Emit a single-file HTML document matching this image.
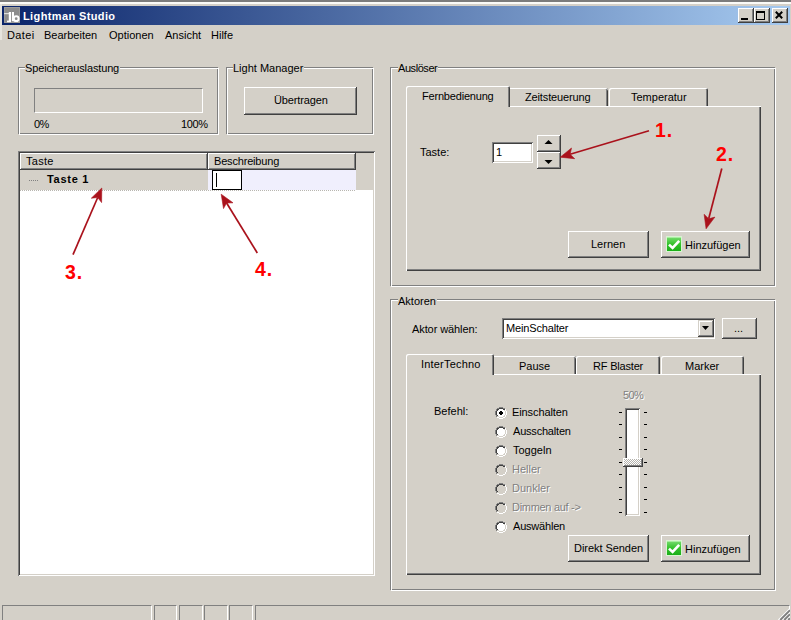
<!DOCTYPE html>
<html><head><meta charset="utf-8">
<style>
*{box-sizing:border-box;margin:0;padding:0}
html,body{width:791px;height:620px;overflow:hidden;background:#d4d0c8}
body{position:relative;font-family:"Liberation Sans",sans-serif;font-size:11px;color:#000;letter-spacing:0}
.a{position:absolute}
.t{position:absolute;white-space:nowrap;line-height:13px}
.raised{position:absolute;background:#d4d0c8;box-shadow:inset -1px -1px #404040,inset 1px 1px #fff,inset -2px -2px #808080}
.sunk{position:absolute;background:#fff;box-shadow:inset 1px 1px #808080,inset -1px -1px #fff,inset 2px 2px #404040,inset -2px -2px #d4d0c8}
.g1{position:absolute;border:1px solid #808080}
.g2{position:absolute;border:1px solid #fff}
.lbl{position:absolute;white-space:nowrap;line-height:13px;background:#d4d0c8;padding:0 1px 0 0}
.red{position:absolute;white-space:nowrap;color:#f00;font-weight:bold;font-size:19.5px;line-height:20px;letter-spacing:0.8px}
.tab{position:absolute;background:#d4d0c8;border-top-left-radius:2px;border-top-right-radius:2px;box-shadow:inset 1px 1px #fff,inset -1px 0 #404040,inset -2px 0 #808080}
.chk{position:absolute;width:16px;height:16px;background:linear-gradient(#8ee88e,#2fb52f);border:1px solid #5cb85c}
.chk::after{content:"";position:absolute;left:3px;top:2px;width:4px;height:7px;border-right:3px solid #fff;border-bottom:3px solid #fff;transform:rotate(40deg)}
.radio{position:absolute;width:12px;height:12px;border-radius:50%;background:#fff;border:1px solid;border-color:#808080 #fff #fff #808080;box-shadow:inset 1px 1px #404040,inset -1px -1px #d4d0c8}
.rdis{background:#d4d0c8}
.sb{position:absolute;height:15px;border-top:1px solid #808080;border-left:1px solid #808080;border-right:1px solid #fff}
.dis{color:#808080;text-shadow:1px 1px #fff}
</style></head><body>
<svg width="0" height="0" style="position:absolute"><defs><linearGradient id="gg" x1="0" y1="0" x2="0" y2="1"><stop offset="0" stop-color="#78dc70"/><stop offset="0.5" stop-color="#34c22c"/><stop offset="1" stop-color="#1aae18"/></linearGradient></defs></svg>
<!-- window top frame -->
<div class="a" style="left:0;top:0;width:791px;height:2px;background:#7c7c7c"></div>
<div class="a" style="left:0;top:2px;width:791px;height:2px;background:#fbfbf8"></div>
<div class="a" style="left:0;top:4px;width:2px;height:36px;background:#e6e4de"></div>
<!-- title bar -->
<div class="a" style="left:2px;top:6px;width:788px;height:19px;background:linear-gradient(90deg,#0a246a,#a6caf0)"></div>
<svg class="a" style="left:4px;top:7px" width="16" height="16"><rect x="0" y="0" width="16" height="16" fill="#8c8c8c"/><rect x="0.5" y="0.5" width="15" height="15" fill="none" stroke="#9c9c9c"/>
<g fill="#fff"><rect x="0" y="6" width="5" height="1.2" fill="#dcdcdc"/><rect x="4.8" y="5" width="2.2" height="9.5"/><rect x="3" y="13.6" width="4" height="1.6"/><rect x="7.9" y="5" width="2.1" height="9.2"/></g>
<ellipse cx="12.2" cy="11.7" rx="2.4" ry="2.4" fill="none" stroke="#fff" stroke-width="2"/></svg>
<div class="t" style="left:23px;top:10px;color:#fff;font-weight:bold;letter-spacing:0.38px">Lightman Studio</div>
<!-- caption buttons -->
<div class="raised" style="left:738px;top:8px;width:16px;height:15px"></div>
<div class="a" style="left:741px;top:18px;width:7px;height:2px;background:#000"></div>
<div class="raised" style="left:754px;top:8px;width:16px;height:15px"></div>
<div class="a" style="left:756px;top:11px;width:9px;height:9px;border:1px solid #000;border-top-width:2px"></div>
<div class="raised" style="left:772px;top:8px;width:16px;height:15px"></div>
<svg class="a" style="left:772px;top:8px" width="16" height="15"><path d="M3.8 3.8L10.2 10.2M10.2 3.8L3.8 10.2" stroke="#000" stroke-width="2"/></svg>
<!-- menu -->
<div class="t" style="left:7px;top:29px;letter-spacing:0.4px">Datei</div>
<div class="t" style="left:44px;top:29px">Bearbeiten</div>
<div class="t" style="left:109px;top:29px">Optionen</div>
<div class="t" style="left:165px;top:29px">Ansicht</div>
<div class="t" style="left:211px;top:29px">Hilfe</div>

<!-- Speicherauslastung group -->
<div class="g1" style="left:18px;top:67px;width:200px;height:67px"></div>
<div class="g2" style="left:19px;top:68px;width:200px;height:67px"></div>
<div class="lbl" style="left:25px;top:62px;letter-spacing:-0.14px">Speicherauslastung</div>
<div class="a" style="left:34px;top:88px;width:169px;height:25px;border-top:1px solid #808080;border-left:1px solid #808080;border-bottom:1px solid #fff;border-right:1px solid #fff"></div>
<div class="t" style="left:34px;top:118px;letter-spacing:-0.6px">0%</div>
<div class="t" style="left:181px;top:118px;letter-spacing:-0.4px">100%</div>

<!-- Light Manager group -->
<div class="g1" style="left:226px;top:67px;width:147px;height:67px"></div>
<div class="g2" style="left:227px;top:68px;width:147px;height:67px"></div>
<div class="lbl" style="left:233px;top:62px">Light Manager</div>
<div class="raised" style="left:244px;top:87px;width:113px;height:28px"></div>
<div class="t" style="left:274px;top:94px;letter-spacing:-0.12px">Übertragen</div>

<!-- List view -->
<div class="sunk" style="left:18px;top:151px;width:357px;height:425px"></div>
<div class="a" style="left:20px;top:153px;width:353px;height:37px;background:#d4d0c8"></div>
<div class="raised" style="left:20px;top:153px;width:188px;height:17px"></div>
<div class="raised" style="left:208px;top:153px;width:148px;height:17px"></div>
<div class="t" style="left:26px;top:155px;letter-spacing:0.3px">Taste</div>
<div class="t" style="left:214px;top:155px;letter-spacing:-0.18px">Beschreibung</div>
<div class="a" style="left:208px;top:170px;width:148px;height:20px;background:#f0effd"></div>
<div class="a" style="left:20px;top:190px;width:336px;height:1px;background:repeating-linear-gradient(90deg,#b8b6b0 0 1px,#fff 1px 2px)"></div>
<div class="a" style="left:29px;top:180px;width:10px;height:1px;background:repeating-linear-gradient(90deg,#808080 0 1px,transparent 1px 2px)"></div>
<div class="t" style="left:47px;top:173px;font-weight:bold;letter-spacing:0.72px">Taste 1</div>
<div class="a" style="left:212px;top:170px;width:30px;height:20px;border:1px solid #000;background:#fff"></div>
<div class="a" style="left:216px;top:173px;width:1px;height:14px;background:#000"></div>

<!-- Auslöser group -->
<div class="g1" style="left:390px;top:67px;width:385px;height:219px"></div>
<div class="g2" style="left:391px;top:68px;width:385px;height:219px"></div>
<div class="lbl" style="left:398px;top:62px;letter-spacing:-0.44px">Auslöser</div>
<div class="a" style="left:406px;top:106px;width:355px;height:165px;box-shadow:inset 1px 1px #fff,inset -1px -1px #404040,inset -2px -2px #808080"></div>
<div class="tab sel" style="left:406px;top:86px;width:104px;height:21px"></div>
<div class="tab" style="left:510px;top:88px;width:98px;height:18px;border-top-left-radius:0;box-shadow:inset 0 1px #fff,inset -1px 0 #404040,inset -2px 0 #808080"></div>
<div class="tab" style="left:609px;top:88px;width:99px;height:18px"></div>
<div class="t" style="left:422px;top:90px;letter-spacing:-0.19px">Fernbedienung</div>
<div class="t" style="left:525px;top:91px;letter-spacing:-0.14px">Zeitsteuerung</div>
<div class="t" style="left:631px;top:91px">Temperatur</div>
<div class="t" style="left:420px;top:146px">Taste:</div>
<div class="sunk" style="left:492px;top:142px;width:41px;height:21px"></div>
<div class="t" style="left:496px;top:146px">1</div>
<div class="raised" style="left:537px;top:135px;width:24px;height:17px"></div>
<div class="raised" style="left:537px;top:152px;width:24px;height:17px"></div>
<svg class="a" style="left:537px;top:135px" width="24" height="34"><path d="M7.5 9h8l-4-4z M7.5 25h8l-4 4z" fill="#000"/></svg>
<div class="raised" style="left:568px;top:231px;width:81px;height:27px"></div>
<div class="t" style="left:591px;top:238px">Lernen</div>
<div class="raised" style="left:661px;top:231px;width:89px;height:27px"></div>
<svg class="a" style="left:666px;top:236px" width="16" height="16"><rect width="16" height="16" fill="#d8f4d0"/><rect x="1" y="1" width="14" height="14" fill="url(#gg)"/><rect x="1" y="1" width="14" height="1" fill="#a8eca0"/><path d="M3 8.6L6.6 12L13.2 4.8" fill="none" stroke="#fff" stroke-width="2.6"/></svg>
<div class="t" style="left:685px;top:239px">Hinzufügen</div>

<!-- Aktoren group -->
<div class="g1" style="left:390px;top:299px;width:385px;height:291px"></div>
<div class="g2" style="left:391px;top:300px;width:385px;height:291px"></div>
<div class="lbl" style="left:398px;top:295px">Aktoren</div>
<div class="t" style="left:412px;top:323px;letter-spacing:-0.09px">Aktor wählen:</div>
<div class="sunk" style="left:502px;top:318px;width:213px;height:21px"></div>
<div class="t" style="left:506px;top:322px;letter-spacing:-0.16px">MeinSchalter</div>
<div class="raised" style="left:698px;top:320px;width:16px;height:17px;box-shadow:inset -1px -1px #404040,inset 1px 1px #d4d0c8,inset -2px -2px #808080,inset 2px 2px #fff"></div>
<svg class="a" style="left:698px;top:320px" width="16" height="17"><path d="M4 6h7l-3.5 4z" fill="#000"/></svg>
<div class="raised" style="left:722px;top:318px;width:35px;height:21px"></div>
<div class="t" style="left:734px;top:322px">...</div>
<div class="a" style="left:406px;top:374px;width:355px;height:201px;box-shadow:inset 1px 1px #fff,inset -1px -1px #404040,inset -2px -2px #808080"></div>
<div class="tab sel" style="left:406px;top:354px;width:88px;height:21px"></div>
<div class="tab" style="left:494px;top:356px;width:82px;height:18px;border-top-left-radius:0;box-shadow:inset 0 1px #fff,inset -1px 0 #404040,inset -2px 0 #808080"></div>
<div class="tab" style="left:576px;top:356px;width:84px;height:18px"></div>
<div class="tab" style="left:661px;top:356px;width:83px;height:18px"></div>
<div class="t" style="left:421px;top:358px;letter-spacing:0.19px">InterTechno</div>
<div class="t" style="left:519px;top:360px">Pause</div>
<div class="t" style="left:593px;top:360px;letter-spacing:-0.19px">RF Blaster</div>
<div class="t" style="left:685px;top:360px">Marker</div>
<div class="t" style="left:434px;top:405px">Befehl:</div>
<svg class="a" style="left:495px;top:407px" width="12" height="12" shape-rendering="crispEdges"><path fill="#808080" d="M4 0h4v1h-4zM2 1h2v1h-2zM8 1h2v1h-2zM1 2h1v2h-1zM0 4h1v4h-1zM1 8h1v2h-1z"/><path fill="#404040" d="M4 1h4v1h-4zM2 2h2v1h-2zM8 2h2v1h-2zM2 3h1v1h-1zM1 4h1v4h-1zM2 8h1v1h-1z"/><path fill="#fff" d="M10 2h1v2h-1zM11 4h1v4h-1zM10 8h1v2h-1zM2 10h2v1h-2zM8 10h2v1h-2zM4 11h4v1h-4z"/><path fill="#d4d0c8" d="M9 3h1v1h-1zM10 4h1v4h-1zM9 8h1v1h-1zM2 9h2v1h-2zM8 9h2v1h-2zM4 10h4v1h-4z"/><path fill="#fff" d="M4 2h4v1h-4zM3 3h6v1h-6zM2 4h8v4h-8zM3 8h6v1h-6zM4 9h4v1h-4z"/><path fill="#000" d="M5 4h2v1h-2zM4 5h4v2h-4zM5 7h2v1h-2z"/></svg>
<div class="t" style="left:512px;top:406px;letter-spacing:-0.1px">Einschalten</div>
<svg class="a" style="left:495px;top:426px" width="12" height="12" shape-rendering="crispEdges"><path fill="#808080" d="M4 0h4v1h-4zM2 1h2v1h-2zM8 1h2v1h-2zM1 2h1v2h-1zM0 4h1v4h-1zM1 8h1v2h-1z"/><path fill="#404040" d="M4 1h4v1h-4zM2 2h2v1h-2zM8 2h2v1h-2zM2 3h1v1h-1zM1 4h1v4h-1zM2 8h1v1h-1z"/><path fill="#fff" d="M10 2h1v2h-1zM11 4h1v4h-1zM10 8h1v2h-1zM2 10h2v1h-2zM8 10h2v1h-2zM4 11h4v1h-4z"/><path fill="#d4d0c8" d="M9 3h1v1h-1zM10 4h1v4h-1zM9 8h1v1h-1zM2 9h2v1h-2zM8 9h2v1h-2zM4 10h4v1h-4z"/><path fill="#fff" d="M4 2h4v1h-4zM3 3h6v1h-6zM2 4h8v4h-8zM3 8h6v1h-6zM4 9h4v1h-4z"/></svg>
<div class="t" style="left:513px;top:425px;letter-spacing:-0.2px">Ausschalten</div>
<svg class="a" style="left:495px;top:445px" width="12" height="12" shape-rendering="crispEdges"><path fill="#808080" d="M4 0h4v1h-4zM2 1h2v1h-2zM8 1h2v1h-2zM1 2h1v2h-1zM0 4h1v4h-1zM1 8h1v2h-1z"/><path fill="#404040" d="M4 1h4v1h-4zM2 2h2v1h-2zM8 2h2v1h-2zM2 3h1v1h-1zM1 4h1v4h-1zM2 8h1v1h-1z"/><path fill="#fff" d="M10 2h1v2h-1zM11 4h1v4h-1zM10 8h1v2h-1zM2 10h2v1h-2zM8 10h2v1h-2zM4 11h4v1h-4z"/><path fill="#d4d0c8" d="M9 3h1v1h-1zM10 4h1v4h-1zM9 8h1v1h-1zM2 9h2v1h-2zM8 9h2v1h-2zM4 10h4v1h-4z"/><path fill="#fff" d="M4 2h4v1h-4zM3 3h6v1h-6zM2 4h8v4h-8zM3 8h6v1h-6zM4 9h4v1h-4z"/></svg>
<div class="t" style="left:513px;top:444px">Toggeln</div>
<svg class="a" style="left:495px;top:464px" width="12" height="12" shape-rendering="crispEdges"><path fill="#808080" d="M4 0h4v1h-4zM2 1h2v1h-2zM8 1h2v1h-2zM1 2h1v2h-1zM0 4h1v4h-1zM1 8h1v2h-1z"/><path fill="#404040" d="M4 1h4v1h-4zM2 2h2v1h-2zM8 2h2v1h-2zM2 3h1v1h-1zM1 4h1v4h-1zM2 8h1v1h-1z"/><path fill="#fff" d="M10 2h1v2h-1zM11 4h1v4h-1zM10 8h1v2h-1zM2 10h2v1h-2zM8 10h2v1h-2zM4 11h4v1h-4z"/><path fill="#d4d0c8" d="M9 3h1v1h-1zM10 4h1v4h-1zM9 8h1v1h-1zM2 9h2v1h-2zM8 9h2v1h-2zM4 10h4v1h-4z"/><path fill="#d4d0c8" d="M4 2h4v1h-4zM3 3h6v1h-6zM2 4h8v4h-8zM3 8h6v1h-6zM4 9h4v1h-4z"/></svg>
<div class="t dis" style="left:512px;top:463px">Heller</div>
<svg class="a" style="left:495px;top:483px" width="12" height="12" shape-rendering="crispEdges"><path fill="#808080" d="M4 0h4v1h-4zM2 1h2v1h-2zM8 1h2v1h-2zM1 2h1v2h-1zM0 4h1v4h-1zM1 8h1v2h-1z"/><path fill="#404040" d="M4 1h4v1h-4zM2 2h2v1h-2zM8 2h2v1h-2zM2 3h1v1h-1zM1 4h1v4h-1zM2 8h1v1h-1z"/><path fill="#fff" d="M10 2h1v2h-1zM11 4h1v4h-1zM10 8h1v2h-1zM2 10h2v1h-2zM8 10h2v1h-2zM4 11h4v1h-4z"/><path fill="#d4d0c8" d="M9 3h1v1h-1zM10 4h1v4h-1zM9 8h1v1h-1zM2 9h2v1h-2zM8 9h2v1h-2zM4 10h4v1h-4z"/><path fill="#d4d0c8" d="M4 2h4v1h-4zM3 3h6v1h-6zM2 4h8v4h-8zM3 8h6v1h-6zM4 9h4v1h-4z"/></svg>
<div class="t dis" style="left:512px;top:482px">Dunkler</div>
<svg class="a" style="left:495px;top:502px" width="12" height="12" shape-rendering="crispEdges"><path fill="#808080" d="M4 0h4v1h-4zM2 1h2v1h-2zM8 1h2v1h-2zM1 2h1v2h-1zM0 4h1v4h-1zM1 8h1v2h-1z"/><path fill="#404040" d="M4 1h4v1h-4zM2 2h2v1h-2zM8 2h2v1h-2zM2 3h1v1h-1zM1 4h1v4h-1zM2 8h1v1h-1z"/><path fill="#fff" d="M10 2h1v2h-1zM11 4h1v4h-1zM10 8h1v2h-1zM2 10h2v1h-2zM8 10h2v1h-2zM4 11h4v1h-4z"/><path fill="#d4d0c8" d="M9 3h1v1h-1zM10 4h1v4h-1zM9 8h1v1h-1zM2 9h2v1h-2zM8 9h2v1h-2zM4 10h4v1h-4z"/><path fill="#d4d0c8" d="M4 2h4v1h-4zM3 3h6v1h-6zM2 4h8v4h-8zM3 8h6v1h-6zM4 9h4v1h-4z"/></svg>
<div class="t dis" style="left:512px;top:501px;letter-spacing:-0.3px">Dimmen auf -&gt;</div>
<svg class="a" style="left:495px;top:521px" width="12" height="12" shape-rendering="crispEdges"><path fill="#808080" d="M4 0h4v1h-4zM2 1h2v1h-2zM8 1h2v1h-2zM1 2h1v2h-1zM0 4h1v4h-1zM1 8h1v2h-1z"/><path fill="#404040" d="M4 1h4v1h-4zM2 2h2v1h-2zM8 2h2v1h-2zM2 3h1v1h-1zM1 4h1v4h-1zM2 8h1v1h-1z"/><path fill="#fff" d="M10 2h1v2h-1zM11 4h1v4h-1zM10 8h1v2h-1zM2 10h2v1h-2zM8 10h2v1h-2zM4 11h4v1h-4z"/><path fill="#d4d0c8" d="M9 3h1v1h-1zM10 4h1v4h-1zM9 8h1v1h-1zM2 9h2v1h-2zM8 9h2v1h-2zM4 10h4v1h-4z"/><path fill="#fff" d="M4 2h4v1h-4zM3 3h6v1h-6zM2 4h8v4h-8zM3 8h6v1h-6zM4 9h4v1h-4z"/></svg>
<div class="t" style="left:513px;top:520px;letter-spacing:-0.2px">Auswählen</div>

<div class="t dis" style="left:623px;top:389px;letter-spacing:-0.6px">50%</div>
<div class="a" style="left:625px;top:408px;width:15px;height:108px;background:#fff;box-shadow:inset 1px 1px #808080,inset -1px -1px #fff,inset 2px 2px #404040,inset -2px -2px #d4d0c8"></div>

<div class="a" style="left:619px;top:412px;width:3px;height:1px;background:#000"></div><div class="a" style="left:644px;top:412px;width:3px;height:1px;background:#000"></div>
<div class="a" style="left:619px;top:424px;width:3px;height:1px;background:#000"></div><div class="a" style="left:644px;top:424px;width:3px;height:1px;background:#000"></div>
<div class="a" style="left:619px;top:437px;width:3px;height:1px;background:#000"></div><div class="a" style="left:644px;top:437px;width:3px;height:1px;background:#000"></div>
<div class="a" style="left:619px;top:449px;width:3px;height:1px;background:#000"></div><div class="a" style="left:644px;top:449px;width:3px;height:1px;background:#000"></div>
<div class="a" style="left:619px;top:462px;width:3px;height:1px;background:#000"></div><div class="a" style="left:644px;top:462px;width:3px;height:1px;background:#000"></div>
<div class="a" style="left:619px;top:474px;width:3px;height:1px;background:#000"></div><div class="a" style="left:644px;top:474px;width:3px;height:1px;background:#000"></div>
<div class="a" style="left:619px;top:487px;width:3px;height:1px;background:#000"></div><div class="a" style="left:644px;top:487px;width:3px;height:1px;background:#000"></div>
<div class="a" style="left:619px;top:499px;width:3px;height:1px;background:#000"></div><div class="a" style="left:644px;top:499px;width:3px;height:1px;background:#000"></div>
<div class="a" style="left:619px;top:512px;width:3px;height:1px;background:#000"></div><div class="a" style="left:644px;top:512px;width:3px;height:1px;background:#000"></div>
<div class="a" style="left:623px;top:458px;width:20px;height:9px;background:repeating-conic-gradient(#fff 0 25%,#b4b2ac 0 50%) 0 0/2px 2px;box-shadow:inset -1px -1px #404040,inset 1px 1px #fff,inset -2px -2px #808080"></div>
<div class="raised" style="left:568px;top:535px;width:81px;height:27px"></div>
<div class="t" style="left:574px;top:542px;letter-spacing:-0.05px">Direkt Senden</div>
<div class="raised" style="left:661px;top:535px;width:89px;height:27px"></div>
<svg class="a" style="left:666px;top:540px" width="16" height="16"><rect width="16" height="16" fill="#d8f4d0"/><rect x="1" y="1" width="14" height="14" fill="url(#gg)"/><rect x="1" y="1" width="14" height="1" fill="#a8eca0"/><path d="M3 8.6L6.6 12L13.2 4.8" fill="none" stroke="#fff" stroke-width="2.6"/></svg>
<div class="t" style="left:685px;top:543px">Hinzufügen</div>

<!-- status bar -->
<div class="sb" style="left:2px;top:605px;width:150px"></div>
<div class="sb" style="left:154px;top:605px;width:23px"></div>
<div class="sb" style="left:179px;top:605px;width:24px"></div>
<div class="sb" style="left:204px;top:605px;width:24px"></div>
<div class="sb" style="left:229px;top:605px;width:24px"></div>
<div class="sb" style="left:255px;top:605px;width:535px"></div>
<svg class="a" style="left:771px;top:600px" width="19" height="20"><path d="M18.5 9L7.5 20M18.5 13L11.5 20M18.5 17L15.5 20" stroke="#fff" stroke-width="1.3"/><path d="M19 10.2L9.2 20M19 14.2L13.2 20M19 18.2L17.2 20" stroke="#808080" stroke-width="1.9"/></svg>
<svg class="a" style="left:0;top:0" width="791" height="620">
<g stroke="#aa121c" stroke-width="1.7" fill="#aa121c" stroke-linejoin="miter">
<line x1="649.0" y1="130.8" x2="570.1" y2="154.3"/><path stroke-width="0.6" d="M560.2 157.2L571.5 148.0L570.1 154.3L574.7 158.7Z"/>
<line x1="721.8" y1="168.5" x2="708.7" y2="218.8"/><path stroke-width="0.6" d="M706.1 228.8L704.1 214.3L708.7 218.8L714.9 217.1Z"/>
<line x1="73.0" y1="254.6" x2="97.7" y2="197.5"/><path stroke-width="0.6" d="M101.8 188.0L101.6 202.6L97.7 197.5L91.3 198.2Z"/>
<line x1="257.3" y1="253.0" x2="226.6" y2="203.0"/><path stroke-width="0.6" d="M221.2 194.2L233.0 202.8L226.6 203.0L223.5 208.6Z"/>
</g></svg>
<div class="red" style="left:655px;top:120px">1.</div>
<div class="red" style="left:716px;top:144px">2.</div>
<div class="red" style="left:65px;top:262px">3.</div>
<div class="red" style="left:255px;top:259px">4.</div>
</body></html>
